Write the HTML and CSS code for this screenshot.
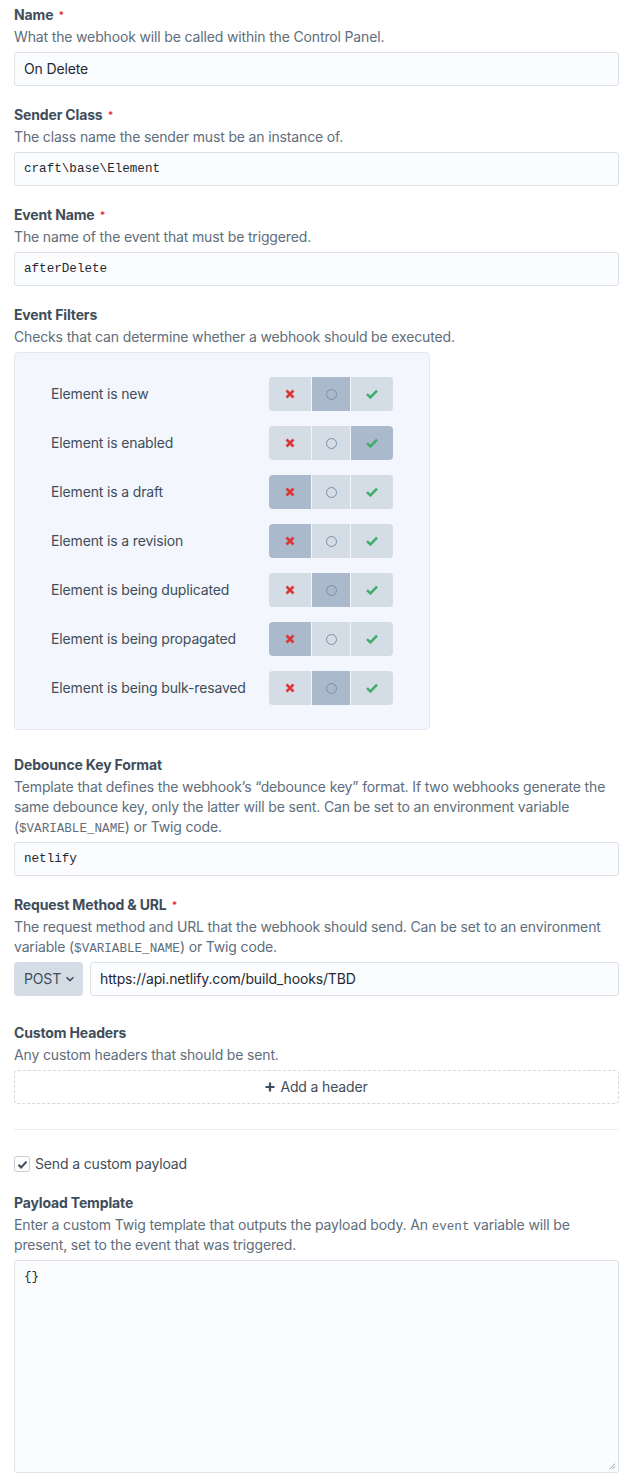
FILE: index.html
```html
<!DOCTYPE html>
<html>
<head>
<meta charset="utf-8">
<link rel="stylesheet" href="styles.css">
</head>
<body>
<div class="form">
  <div class="field">
    <div class="label">Name <span class="req">*</span></div>
    <div class="instr">What the webhook will be called within the Control Panel.</div>
    <div class="input">On Delete</div>
  </div>
  <div class="field">
    <div class="label">Sender Class <span class="req">*</span></div>
    <div class="instr">The class name the sender must be an instance of.</div>
    <div class="input code">craft\base\Element</div>
  </div>
  <div class="field">
    <div class="label">Event Name <span class="req">*</span></div>
    <div class="instr">The name of the event that must be triggered.</div>
    <div class="input code">afterDelete</div>
  </div>
  <div class="field f-filters">
    <div class="label">Event Filters</div>
    <div class="instr">Checks that can determine whether a webhook should be executed.</div>
    <div class="filters">
      <div class="flabel">Element is new</div>
      <div class="toggle"><span class="seg no"><svg viewBox="0 0 10 10"><path d="M1.5 1.5L8.5 8.5M8.5 1.5L1.5 8.5"/></svg></span><span class="seg mid on"><i></i></span><span class="seg yes"><svg viewBox="0 0 12 10"><path d="M1 5.2L4.4 8.4L11 1.6"/></svg></span></div>
      <div class="flabel">Element is enabled</div>
      <div class="toggle"><span class="seg no"><svg viewBox="0 0 10 10"><path d="M1.5 1.5L8.5 8.5M8.5 1.5L1.5 8.5"/></svg></span><span class="seg mid"><i></i></span><span class="seg yes on"><svg viewBox="0 0 12 10"><path d="M1 5.2L4.4 8.4L11 1.6"/></svg></span></div>
      <div class="flabel">Element is a draft</div>
      <div class="toggle"><span class="seg no on"><svg viewBox="0 0 10 10"><path d="M1.5 1.5L8.5 8.5M8.5 1.5L1.5 8.5"/></svg></span><span class="seg mid"><i></i></span><span class="seg yes"><svg viewBox="0 0 12 10"><path d="M1 5.2L4.4 8.4L11 1.6"/></svg></span></div>
      <div class="flabel">Element is a revision</div>
      <div class="toggle"><span class="seg no on"><svg viewBox="0 0 10 10"><path d="M1.5 1.5L8.5 8.5M8.5 1.5L1.5 8.5"/></svg></span><span class="seg mid"><i></i></span><span class="seg yes"><svg viewBox="0 0 12 10"><path d="M1 5.2L4.4 8.4L11 1.6"/></svg></span></div>
      <div class="flabel">Element is being duplicated</div>
      <div class="toggle"><span class="seg no"><svg viewBox="0 0 10 10"><path d="M1.5 1.5L8.5 8.5M8.5 1.5L1.5 8.5"/></svg></span><span class="seg mid on"><i></i></span><span class="seg yes"><svg viewBox="0 0 12 10"><path d="M1 5.2L4.4 8.4L11 1.6"/></svg></span></div>
      <div class="flabel">Element is being propagated</div>
      <div class="toggle"><span class="seg no on"><svg viewBox="0 0 10 10"><path d="M1.5 1.5L8.5 8.5M8.5 1.5L1.5 8.5"/></svg></span><span class="seg mid"><i></i></span><span class="seg yes"><svg viewBox="0 0 12 10"><path d="M1 5.2L4.4 8.4L11 1.6"/></svg></span></div>
      <div class="flabel">Element is being bulk-resaved</div>
      <div class="toggle"><span class="seg no"><svg viewBox="0 0 10 10"><path d="M1.5 1.5L8.5 8.5M8.5 1.5L1.5 8.5"/></svg></span><span class="seg mid on"><i></i></span><span class="seg yes"><svg viewBox="0 0 12 10"><path d="M1 5.2L4.4 8.4L11 1.6"/></svg></span></div>
    </div>
  </div>
  <div class="field f-debounce">
    <div class="label">Debounce Key Format</div>
    <div class="instr">Template that defines the webhook’s “debounce key” format. If two webhooks generate the same debounce key, only the latter will be sent. Can be set to an environment variable (<code>$VARIABLE_NAME</code>) or Twig code.</div>
    <div class="input code">netlify</div>
  </div>
  <div class="field f-request">
    <div class="label">Request Method &amp; URL <span class="req">*</span></div>
    <div class="instr">The request method and URL that the webhook should send. Can be set to an environment variable (<code>$VARIABLE_NAME</code>) or Twig code.</div>
    <div class="urlrow">
      <div class="select">POST <svg viewBox="0 0 10 6"><path d="M1.5 1.2L5 4.6L8.5 1.2"/></svg></div>
      <div class="input grow">https://api.netlify.com/build_hooks/TBD</div>
    </div>
  </div>
  <div class="field">
    <div class="label">Custom Headers</div>
    <div class="instr">Any custom headers that should be sent.</div>
    <div class="addbtn"><svg viewBox="0 0 10 10"><path d="M5 0.5V9.5M0.5 5H9.5"/></svg>Add a header</div>
  </div>
  <hr class="sep">
  <div class="check"><span class="box"><svg viewBox="0 0 12 10"><path d="M1.5 5.2L4.5 8.2L10.5 1.8"/></svg></span>Send a custom payload</div>
  <div class="field">
    <div class="label">Payload Template</div>
    <div class="instr">Enter a custom Twig template that outputs the payload body. An <code>event</code> variable will be present, set to the event that was triggered.</div>
    <div class="textarea code">{}<svg class="grip" viewBox="0 0 10 10"><path d="M9 3L3 9M9 6L6 9"/></svg></div>
  </div>
</div>
</body>
</html>
```
FILE: styles.css
```css
html, body { margin: 0; padding: 0; background: #fff; }
body {
  font-family: Inter, "Noto Sans", sans-serif;
  font-size: 14px;
  line-height: 20px;
  letter-spacing: -0.15px;
  color: #3f4d5a;
}
.form { padding: 5px 16px 0 14px; }
.field { margin-bottom: 19px; }
.f-filters { margin-bottom: 25px; }
.f-debounce { margin-bottom: 19px; }
.f-request { margin-bottom: 27px; }
.label { font-weight: 700; color: #3f4d5a; height: 20px; }
.req { color: #e12d39; font-size: 10px; vertical-align: 1px; margin-left: 2px; }
.instr { color: #606d7b; margin-top: 2px; margin-bottom: 5px; }
code, .code { font-family: "Liberation Mono", "DejaVu Sans Mono", monospace; letter-spacing: 0; }
code { font-size: 12.6px; line-height: 1; }
.input {
  box-sizing: border-box;
  height: 34px;
  border: 1px solid #dde2e8;
  border-radius: 3px;
  background: #fbfcfe;
  padding: 6px 9px;
  color: #1f2933;
}
.input.code { font-size: 12.6px; }
.filters {
  box-sizing: border-box;
  width: 416px;
  margin-top: 5px;
  border: 1px solid #e3e8ef;
  border-radius: 4px;
  background: #f3f7fd;
  padding: 24px 0 24px 36px;
  display: grid;
  grid-template-columns: 218px 124px;
  row-gap: 15px;
  align-items: center;
}
.flabel { color: #3f4d5a; }
.toggle { display: flex; height: 34px; gap: 1px; }
.seg {
  display: flex; align-items: center; justify-content: center;
  background: #d4dce6;
}
.seg.no { width: 42px; border-radius: 4px 0 0 4px; }
.seg.mid { width: 38px; }
.seg.yes { width: 42px; border-radius: 0 4px 4px 0; }
.seg.on { background: #aabacc; }
.seg.no svg { width: 10px; height: 10px; fill: none; stroke: #db3737; stroke-width: 2.6; }
.seg.yes svg { width: 12px; height: 10px; fill: none; stroke: #3cae6a; stroke-width: 2.5; }
.seg.mid i { width: 9px; height: 9px; border: 1px solid #7b8fa9; border-radius: 50%; }
.urlrow { display: flex; gap: 7px; }
.select {
  box-sizing: border-box;
  width: 69px; height: 34px;
  background: #d4dce6;
  border-radius: 4px;
  display: flex; align-items: center;
  padding-left: 10px;
  color: #3f4d5a;
}
.select svg { width: 10px; height: 6px; margin-left: 4px; fill: none; stroke: #3f4d5a; stroke-width: 1.5; }
.grow { flex: 1; }
.addbtn {
  box-sizing: border-box;
  height: 34px;
  border: 1px dashed #d3d9e0;
  border-radius: 4px;
  display: flex; align-items: center; justify-content: center;
  color: #3f4d5a;
}
.addbtn svg { width: 10px; height: 10px; margin-right: 5px; fill: none; stroke: #3f4d5a; stroke-width: 2.2; }
.sep { border: 0; height: 1px; background: #e9edf1; margin: 25px 0 24px 0; }
.check { display: flex; align-items: center; height: 20px; margin-bottom: 19px; color: #3f4d5a; }
.check .box {
  box-sizing: border-box;
  width: 16px; height: 16px;
  border: 1px solid #c5ccd5;
  border-radius: 3px;
  background: #fff;
  margin-right: 5px;
  display: flex; align-items: center; justify-content: center;
}
.check .box svg { width: 11px; height: 9px; fill: none; stroke: #3f4d5a; stroke-width: 2.4; }
.textarea {
  position: relative;
  box-sizing: border-box;
  height: 213px;
  border: 1px solid #dde2e8;
  border-radius: 3px;
  background: #fbfcfe;
  padding: 6px 9px;
  font-size: 12.6px;
  color: #1f2933;
}
.grip { position: absolute; right: 2px; bottom: 2px; width: 9px; height: 9px; fill: none; stroke: #8a96a3; stroke-width: 1; }
```
